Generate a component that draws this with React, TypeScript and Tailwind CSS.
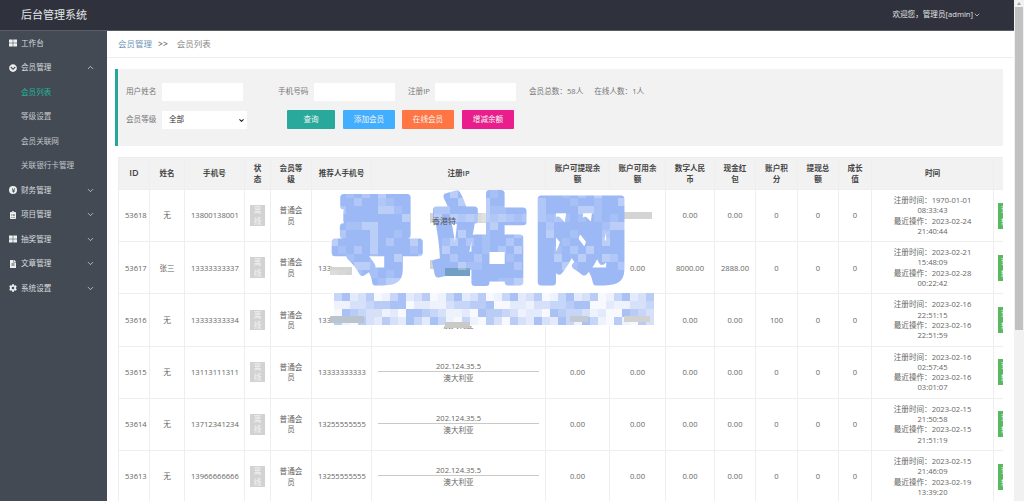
import { ChevronDown, ChevronUp } from "lucide-react";
import { FaThLarge, FaChevronCircleDown, FaYenSign, FaClipboardList, FaFileAlt, FaCog } from "react-icons/fa";
import type { ReactNode } from "react";

const FONT = "font-['Open_Sans','Noto_Sans_CJK_SC',sans-serif]";

type Member = {
  id: number;
  name: string;
  phone: string;
  referrer: string;
  withdrawable: string;
  usable: string;
  digital: string;
  packet: string;
  points: string;
  reg: [string, string];
  last: [string, string];
};

const members: Member[] = [
  { id: 53618, name: "无", phone: "13800138001", referrer: "", withdrawable: "0.00", usable: "0.00", digital: "0.00", packet: "0.00", points: "0", reg: ["1970-01-01", "08:33:43"], last: ["2023-02-24", "21:40:44"] },
  { id: 53617, name: "张三", phone: "13333333337", referrer: "13333333333", withdrawable: "0.00", usable: "0.00", digital: "8000.00", packet: "2888.00", points: "0", reg: ["2023-02-21", "15:48:09"], last: ["2023-02-28", "00:22:42"] },
  { id: 53616, name: "无", phone: "13333333334", referrer: "13333333333", withdrawable: "0.00", usable: "0.00", digital: "0.00", packet: "0.00", points: "100", reg: ["2023-02-16", "22:51:15"], last: ["2023-02-16", "22:51:59"] },
  { id: 53615, name: "无", phone: "13113111311", referrer: "13333333333", withdrawable: "0.00", usable: "0.00", digital: "0.00", packet: "0.00", points: "0", reg: ["2023-02-16", "02:57:45"], last: ["2023-02-16", "03:01:07"] },
  { id: 53614, name: "无", phone: "13712341234", referrer: "13255555555", withdrawable: "0.00", usable: "0.00", digital: "0.00", packet: "0.00", points: "0", reg: ["2023-02-15", "21:50:58"], last: ["2023-02-15", "21:51:19"] },
  { id: 53613, name: "无", phone: "13966666666", referrer: "13255555555", withdrawable: "0.00", usable: "0.00", digital: "0.00", packet: "0.00", points: "0", reg: ["2023-02-15", "21:46:09"], last: ["2023-02-19", "13:39:20"] },
];

const colWidths = [31, 35, 60, 26, 41, 60, 174, 64, 56, 49, 41, 42, 41, 33, 122, 40];

const headers = ["ID", "姓名", "手机号", "状态", "会员等级", "推荐人手机号", "注册IP", "账户可提现余额", "账户可用余额", "数字人民币", "现金红包", "账户积分", "提现总额", "成长值", "时间", "操作"];

function NavItem({ icon, label, open }: { icon: ReactNode; label: string; open?: boolean }) {
  return (
    <div className="h-[24.5px] flex items-center pl-[9px] pr-[12px] text-[#d9dcdf] text-[7.6px]">
      <span className="w-[8px] h-[8px] flex items-center justify-center text-[8px] text-[#eceeef] mr-[4px]">{icon}</span>
      <span className="flex-1">{label}</span>
      {open ? <ChevronUp size={9} strokeWidth={2} /> : <ChevronDown size={9} strokeWidth={2} />}
    </div>
  );
}

function SubItem({ label, active }: { label: string; active?: boolean }) {
  return (
    <div className={`h-[24.5px] flex items-center pl-[21px] text-[7.6px] ${active ? "text-[#1fb39c]" : "text-[#c3c7cc]"}`}>{label}</div>
  );
}

function Sidebar() {
  return (
    <aside className="w-[107px] shrink-0 bg-[#434a54]">
      <div className="h-[24.5px] flex items-center pl-[9px] text-[#d9dcdf] text-[7.6px]">
        <FaThLarge className="w-[8px] h-[8px] text-[#eceeef] mr-[4px]" />
        工作台
      </div>
      <NavItem icon={<FaChevronCircleDown />} label="会员管理" open />
      <SubItem label="会员列表" active />
      <SubItem label="等级设置" />
      <SubItem label="会员关联网" />
      <SubItem label="关联银行卡管理" />
      <NavItem icon={<span className="w-[8px] h-[8px] rounded-full bg-[#eceeef] flex items-center justify-center text-[#434a54] text-[5px]"><FaYenSign /></span>} label="财务管理" />
      <NavItem icon={<FaClipboardList />} label="项目管理" />
      <NavItem icon={<FaThLarge />} label="抽奖管理" />
      <NavItem icon={<FaFileAlt />} label="文章管理" />
      <NavItem icon={<FaCog />} label="系统设置" />
    </aside>
  );
}

function Label({ children, className }: { children: ReactNode; className: string }) {
  return <span className={`text-[7.6px] text-[#777] ${className}`}>{children}</span>;
}

function ActionButton({ label, color, width }: { label: string; color: string; width: string }) {
  return <button className={`h-[19px] rounded-[1px] text-[7.6px] text-[#f4f4f4] ${color} ${width}`}>{label}</button>;
}

function FilterPanel() {
  return (
    <section className="ml-[8px] mr-[11px] mt-[11px] h-[77px] bg-[#f2f2f2] border-l-[3px] border-[#26a69a] pl-[8px] pt-[14px]">
      <div className="flex items-center h-[18px]">
        <Label className="w-[36px]">用户姓名</Label>
        <div className="w-[81px] h-[18px] bg-white" />
        <Label className="ml-[35px] w-[36px]">手机号码</Label>
        <div className="w-[81px] h-[18px] bg-white" />
        <Label className="ml-[13px] w-[27px]">注册IP</Label>
        <div className="w-[81px] h-[18px] bg-white" />
        <Label className="ml-[13px]">会员总数：58人</Label>
        <Label className="ml-[11px]">在线人数：1人</Label>
      </div>
      <div className="flex items-center h-[19px] mt-[9px]">
        <Label className="w-[36px]">会员等级</Label>
        <div className="relative w-[85px] h-[18px]">
          <select className="block appearance-none w-full h-full bg-white text-[7.6px] text-[#333] pl-[7px]" defaultValue="全部">
            <option>全部</option>
          </select>
          <ChevronDown size={7} strokeWidth={3.5} className="absolute right-[2px] top-[6px] text-[#222] pointer-events-none" />
        </div>
        <ActionButton label="查询" color="bg-[#29a99b]" width="ml-[40px] w-[48px]" />
        <ActionButton label="添加会员" color="bg-[#42aeff]" width="ml-[8px] w-[52px]" />
        <ActionButton label="在线会员" color="bg-[#ff7544]" width="ml-[7px] w-[52px]" />
        <ActionButton label="增减余额" color="bg-[#e91e8c]" width="ml-[8px] w-[52px]" />
      </div>
    </section>
  );
}

function Row({ m }: { m: Member }) {
  const cell = "border border-[#eeeeee] text-center align-middle px-[6px] text-[#666] leading-[10.3px]";
  return (
    <tr className="h-[52.2px]">
      <td className={cell}>{m.id}</td>
      <td className={cell}>{m.name}</td>
      <td className={cell}>{m.phone}</td>
      <td className="border border-[#eeeeee] align-middle text-center">
        <span className="mx-auto block w-[15px] bg-[#d2d2d2] text-[#f4f4f4] leading-[10.3px] [word-break:break-all]">离线</span>
      </td>
      <td className={cell}>普通会员</td>
      <td className={cell}>{m.referrer}</td>
      <td className={cell}>
        <div className="leading-[10px]">202.124.35.5</div>
        <div className="border-t border-[#c9c9c9] leading-[12px]">澳大利亚</div>
      </td>
      <td className={cell}>{m.withdrawable}</td>
      <td className={cell}>{m.usable}</td>
      <td className={cell}>{m.digital}</td>
      <td className={cell}>{m.packet}</td>
      <td className={cell}>{m.points}</td>
      <td className={cell}>0</td>
      <td className={cell}>0</td>
      <td className={cell}>
        注册时间：{m.reg[0]} {m.reg[1]}
        <br />
        最近操作：{m.last[0]} {m.last[1]}
      </td>
      <td className="border border-[#eeeeee] align-middle pl-[4px]">
        <span className="block w-[30px] h-[26px] bg-[#5cb85c] text-white text-left pl-[3px] leading-[13px]">查看编辑</span>
      </td>
    </tr>
  );
}

function MemberTable() {
  return (
    <div className="ml-[11px] mt-[11px] mr-[11px] overflow-hidden">
      <table className="table-fixed border-collapse text-[7.6px] w-[915px]">
        <colgroup>
          {colWidths.map((w, i) => (
            <col key={i} style={{ width: w }} />
          ))}
        </colgroup>
        <thead>
          <tr className="h-[32px] bg-[#f2f2f2]">
            {headers.map((h, i) => (
              <th key={h} className={`border border-[#eeeeee] text-center align-middle font-semibold text-[#444] leading-[10.3px] px-[6px] ${i === 0 ? "text-[9px]" : ""}`}>
                {h}
              </th>
            ))}
          </tr>
        </thead>
        <tbody>
          {members.map((m) => (
            <Row key={m.id} m={m} />
          ))}
        </tbody>
      </table>
    </div>
  );
}

// pixelated site stamp sitting over the table
function Watermark() {
  const blues = ["#c6d6f8", "#e3eafb", "#b9ccf6", "#eef2fc", "#a9c1f5", "#d6e1f9", "#f7f9fe"];
  const line: ReactNode[] = [];
  for (let y = 0; y < 4; y++) {
    for (let x = 0; x < 40; x++) {
      const k = (x * 11 + y * 17 + ((x * y * 3) % 5)) % blues.length;
      line.push(<rect key={`l${x}-${y}`} x={334 + x * 8} y={293 + y * 8} width={8} height={8} fill={blues[k]} />);
    }
  }
  const veil: ReactNode[] = [];
  for (let y = 0; y < 12; y++) {
    for (let x = 0; x < 38; x++) {
      const k = (x * 5 + y * 11 + ((x * y) % 7)) % 9;
      if (k < 4) veil.push(<rect key={`v${x}-${y}`} x={330 + x * 8} y={190 + y * 8} width={8} height={8} fill="#ffffff" opacity={k * 0.1} />);
    }
  }
  return (
    <svg className="absolute inset-0 pointer-events-none" width={1024} height={501} viewBox="0 0 1024 501">
      <path d="M332 190H628V292H652V326H332Z" fill="#ffffff" />
      <g fill="#d4d4d2">
        <rect x={330} y={267} width={22} height={8} />
        <rect x={430} y={213} width={56} height={10} />
        <rect x={430} y={260} width={56} height={9} />
        <rect x={612} y={212} width={40} height={7} />
      </g>
      <g fontFamily="'Noto Sans CJK SC', sans-serif" fontWeight={700} fontSize={94} fill="#9db9f5" stroke="#9db9f5" strokeWidth={7} strokeLinejoin="round">
        <text x={329} y={274}>寻</text>
        <text x={432} y={274}>站</text>
        <text x={534} y={274}>网</text>
      </g>
      <rect x={445} y={268} width={25} height={8} fill="#72a0c4" />
      {veil}
      {line}
      <rect x={330} y={316} width={34} height={7} fill="#b9c4cf" />
      <rect x={445} y={322} width={25} height={6} fill="#c9c9c7" />
      <rect x={570} y={316} width={18} height={6} fill="#c4cad2" />
      <rect x={624} y={316} width={26} height={6} fill="#d2d2d0" />
      <text x={432} y={224} fontFamily="'Noto Sans CJK SC', sans-serif" fontSize={8} fill="#555">香港特</text>
    </svg>
  );
}

export default function App() {
  return (
    <div className={`relative w-[1024px] h-[501px] overflow-hidden bg-white flex ${FONT}`}>
      <div className="flex-1 min-w-0 flex flex-col">
        <header className="h-[30px] shrink-0 bg-[#2f323c] flex items-center pl-[21px] pr-[33px] justify-between border-b border-[#5a5d66] box-content">
          <span className="text-[11px] text-[#e4e5e7]">后台管理系统</span>
          <span className="flex items-center text-[7.6px] text-[#e4e5e7]">
            欢迎您，管理员[admin]
            <ChevronDown size={8} />
          </span>
        </header>
        <div className="flex-1 min-h-0 flex">
          <Sidebar />
          <main className="flex-1 min-w-0 overflow-hidden">
            <div className="h-[27px] border-b border-[#eeeeee] flex items-center pl-[11px] text-[8.5px]">
              <span className="text-[#6f94b5]">会员管理</span>
              <span className="ml-[6px] text-[#666] font-semibold">&gt;&gt;</span>
              <span className="ml-[9px] text-[#888]">会员列表</span>
            </div>
            <FilterPanel />
            <MemberTable />
          </main>
        </div>
      </div>
      <div className="w-[10px] shrink-0 bg-[#f1f1f1] flex flex-col items-center">
        <div className="h-[7px] flex items-center justify-center">
          <div className="w-0 h-0 border-x-[2px] border-b-[3px] border-x-transparent border-b-[#a3a3a3]" />
        </div>
        <div className="w-[8px] h-[323px] bg-[#c1c1c1]" />
      </div>
      <Watermark />
    </div>
  );
}
